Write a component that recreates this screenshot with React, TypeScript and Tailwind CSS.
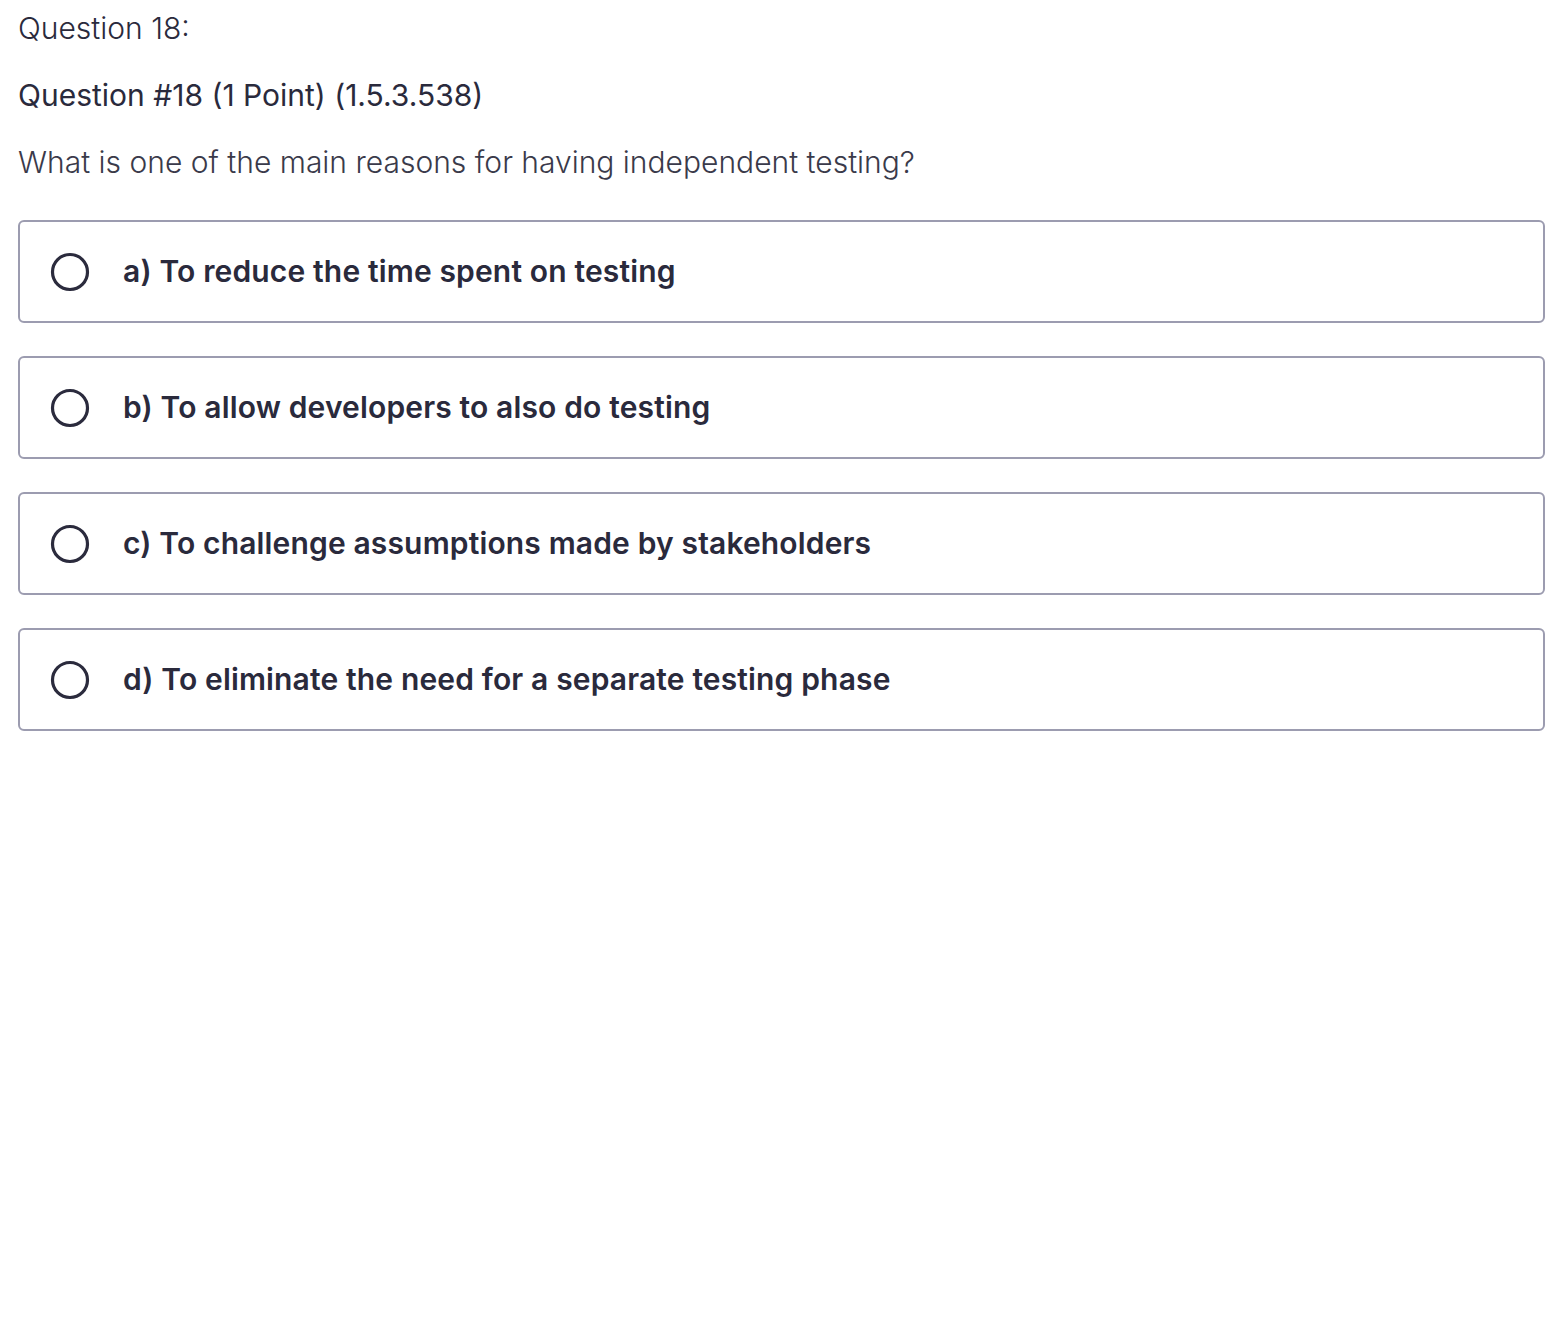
const OPTIONS = [
  'a) To reduce the time spent on testing',
  'b) To allow developers to also do testing',
  'c) To challenge assumptions made by stakeholders',
  'd) To eliminate the need for a separate testing phase',
];

function RadioCircle() {
  return (
    <svg width="40" height="40" viewBox="0 0 40 40" className="shrink-0">
      <circle cx="20" cy="20" r="17.5" fill="none" stroke="#2b2b3d" strokeWidth="3.2" />
    </svg>
  );
}

export default function App() {
  return (
    <div className="min-h-screen bg-white pl-[18px] pr-[21px] pt-[8px] font-['Inter',sans-serif] text-[#2a2a3c]">
      <p className="text-[30px] leading-[40px] font-light">Question 18:</p>
      <p className="mt-[27px] text-[30px] leading-[40px] font-normal">Question #18 (1 Point) (1.5.3.538)</p>
      <p className="mt-[27px] text-[30px] leading-[40px] font-light text-[#3a3a4a]">
        What is one of the main reasons for having independent testing?
      </p>

      <div className="mt-[38px] flex flex-col gap-[33px]">
        {OPTIONS.map((opt) => (
          <label
            key={opt}
            className="flex h-[103px] items-center gap-[33px] rounded-[6px] border-2 border-[#9c9cb0] pl-[30px]"
          >
            <RadioCircle />
            <span className="text-[30px] font-semibold tracking-[0.15px] text-[#2a2a3c]">{opt}</span>
          </label>
        ))}
      </div>
    </div>
  );
}
